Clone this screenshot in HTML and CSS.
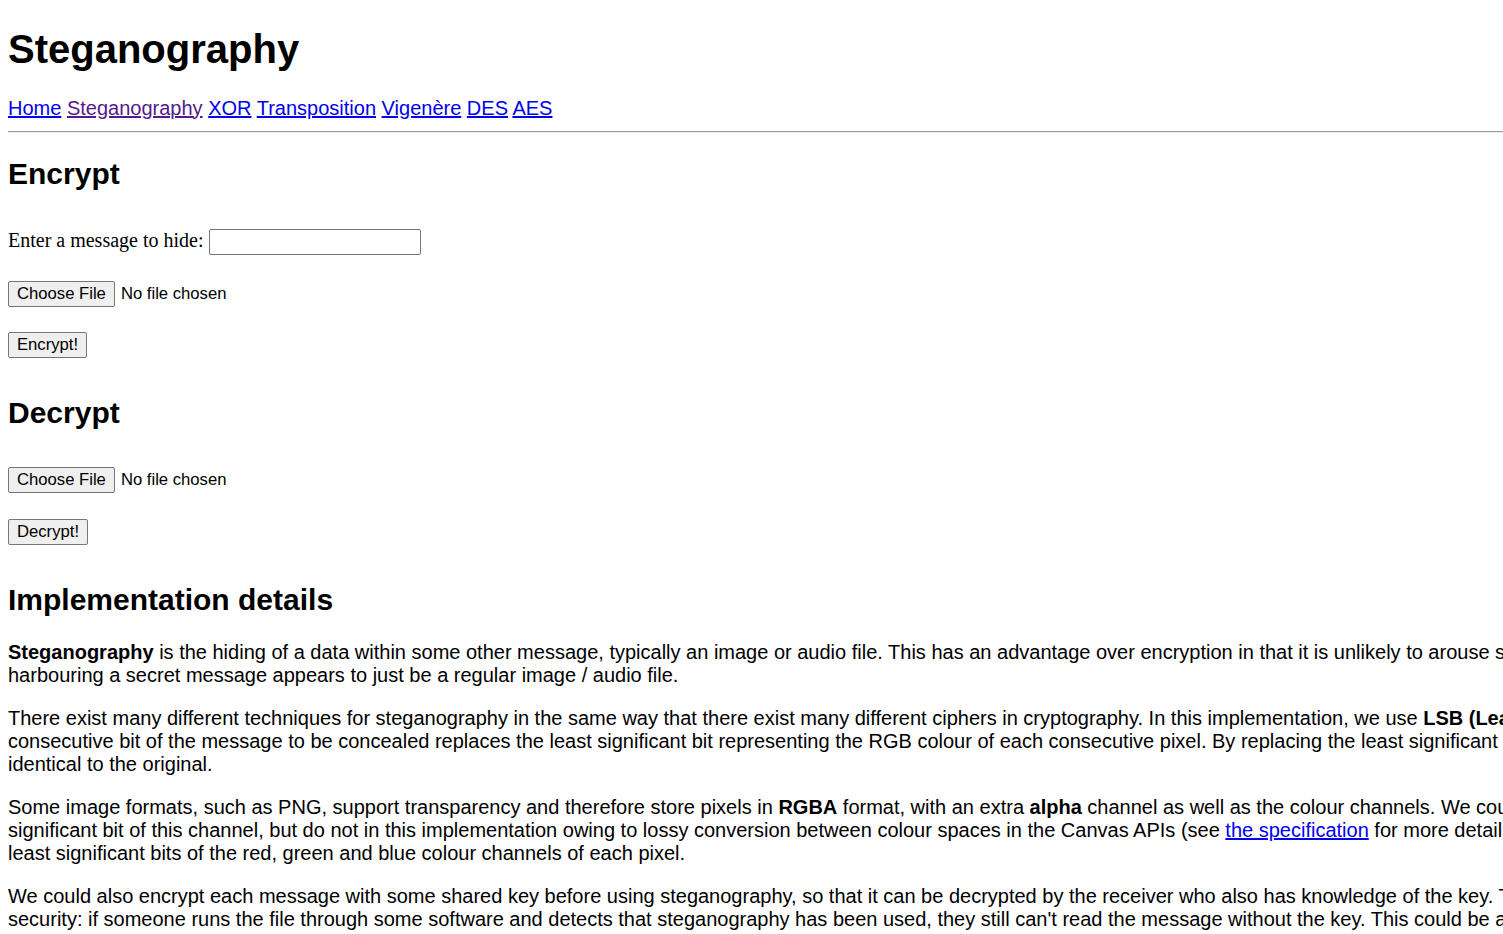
FILE: index.html
```html
<!DOCTYPE html>
<html lang="en">
<head>
<meta charset="utf-8">
<title>Steganography</title>
<link rel="stylesheet" href="styles.css">
</head>
<body>
<h1 class="title">Steganography</h1>
<nav class="nav">
<a href="#" class="link">Home</a>
<a href="#" class="link visited">Steganography</a>
<a href="#" class="link">XOR</a>
<a href="#" class="link">Transposition</a>
<a href="#" class="link">Vigenère</a>
<a href="#" class="link">DES</a>
<a href="#" class="link">AES</a>
</nav>
<hr class="rule">

<h2 class="heading">Encrypt</h2>
<form class="form">
  <div class="row row-message">
    <label class="label" for="msg">Enter a message to hide:</label>
    <input class="text-input" id="msg" type="text">
  </div>
  <div class="row">
    <button type="button" class="btn">Choose File</button>
    <span class="file-status">No file chosen</span>
  </div>
  <div class="row">
    <button type="button" class="btn">Encrypt!</button>
  </div>
</form>

<h2 class="heading">Decrypt</h2>
<form class="form">
  <div class="row">
    <button type="button" class="btn">Choose File</button>
    <span class="file-status">No file chosen</span>
  </div>
  <div class="row">
    <button type="button" class="btn">Decrypt!</button>
  </div>
</form>

<h2 class="heading heading-details">Implementation details</h2>
<p class="para"><strong>Steganography</strong> is the hiding of a data within some other message, typically an image or audio file. This has an advantage over encryption in that it is unlikely to arouse suspicion, as a file<br>harbouring a secret message appears to just be a regular image / audio file.</p>
<p class="para">There exist many different techniques for steganography in the same way that there exist many different ciphers in cryptography. In this implementation, we use <strong>LSB (Least Significant Bit)</strong> steganography, in which each<br>consecutive bit of the message to be concealed replaces the least significant bit representing the RGB colour of each consecutive pixel. By replacing the least significant bit, the resulting image is visually<br>identical to the original.</p>
<p class="para">Some image formats, such as PNG, support transparency and therefore store pixels in <strong>RGBA</strong> format, with an extra <strong>alpha</strong> channel as well as the colour channels. We could also make use of the least<br>significant bit of this channel, but do not in this implementation owing to lossy conversion between colour spaces in the Canvas APIs (see <a href="#" class="link">the specification</a> for more details). Instead, we only use the<br>least significant bits of the red, green and blue colour channels of each pixel.</p>
<p class="para">We could also encrypt each message with some shared key before using steganography, so that it can be decrypted by the receiver who also has knowledge of the key. This would add an extra layer of<br>security: if someone runs the file through some software and detects that steganography has been used, they still can't read the message without the key. This could be a possible future improvement.</p>
</body>
</html>
```

FILE: styles.css
```css
html {
  overflow: hidden;
  background: #ffffff;
}

body {
  margin: 0 8px 8px;
  width: 2200px;
  font-family: "Liberation Sans", Arial, sans-serif;
  font-size: 20px;
  color: #000000;
}

.title {
  font-size: 40px;
  font-weight: bold;
  margin: 26.8px 0 24.8px;
}

.nav {
  font-size: 20px;
}

.link {
  color: #0000ee;
  text-decoration: underline;
}

.link.visited {
  color: #551a8b;
}

.rule {
  margin: 11px 0 8px;
  border: none;
  border-top: 1px solid #9a9a9a;
  border-bottom: 1px solid #eeeeee;
  height: 0;
}

.heading {
  font-size: 30px;
  font-weight: bold;
  margin: 24.5px 0;
}

.heading-details {
  margin-bottom: 23.5px;
}

.form {
  display: flex;
  flex-direction: column;
  align-items: flex-start;
  gap: 25.5px;
  padding: 12.5px 0 13.75px;
  margin: 0;
}

.row {
  display: flex;
  align-items: center;
  gap: 6px;
  height: 26px;
}

.row-message {
  gap: 5px;
  margin-top: 1px;
}

.label {
  font-family: "Liberation Serif", "Times New Roman", serif;
  font-size: 20px;
  padding-bottom: 4px;
}

.text-input {
  box-sizing: border-box;
  width: 212px;
  height: 26px;
  margin: 0;
  border: 1px solid #767676;
  border-radius: 2px;
  background: #ffffff;
  font-family: "Liberation Sans", Arial, sans-serif;
  font-size: 16.67px;
  padding: 1px 3px;
}

.btn {
  box-sizing: border-box;
  height: 26px;
  margin: 0;
  padding: 0 8px;
  border: 1px solid #767676;
  border-radius: 2px;
  background: #efefef;
  color: #000000;
  font-family: "Liberation Sans", Arial, sans-serif;
  font-size: 16.67px;
  line-height: 24px;
}

.file-status {
  font-size: 16.67px;
}

.para {
  margin: 20px 0;
  line-height: 23px;
  white-space: nowrap;
}
```
